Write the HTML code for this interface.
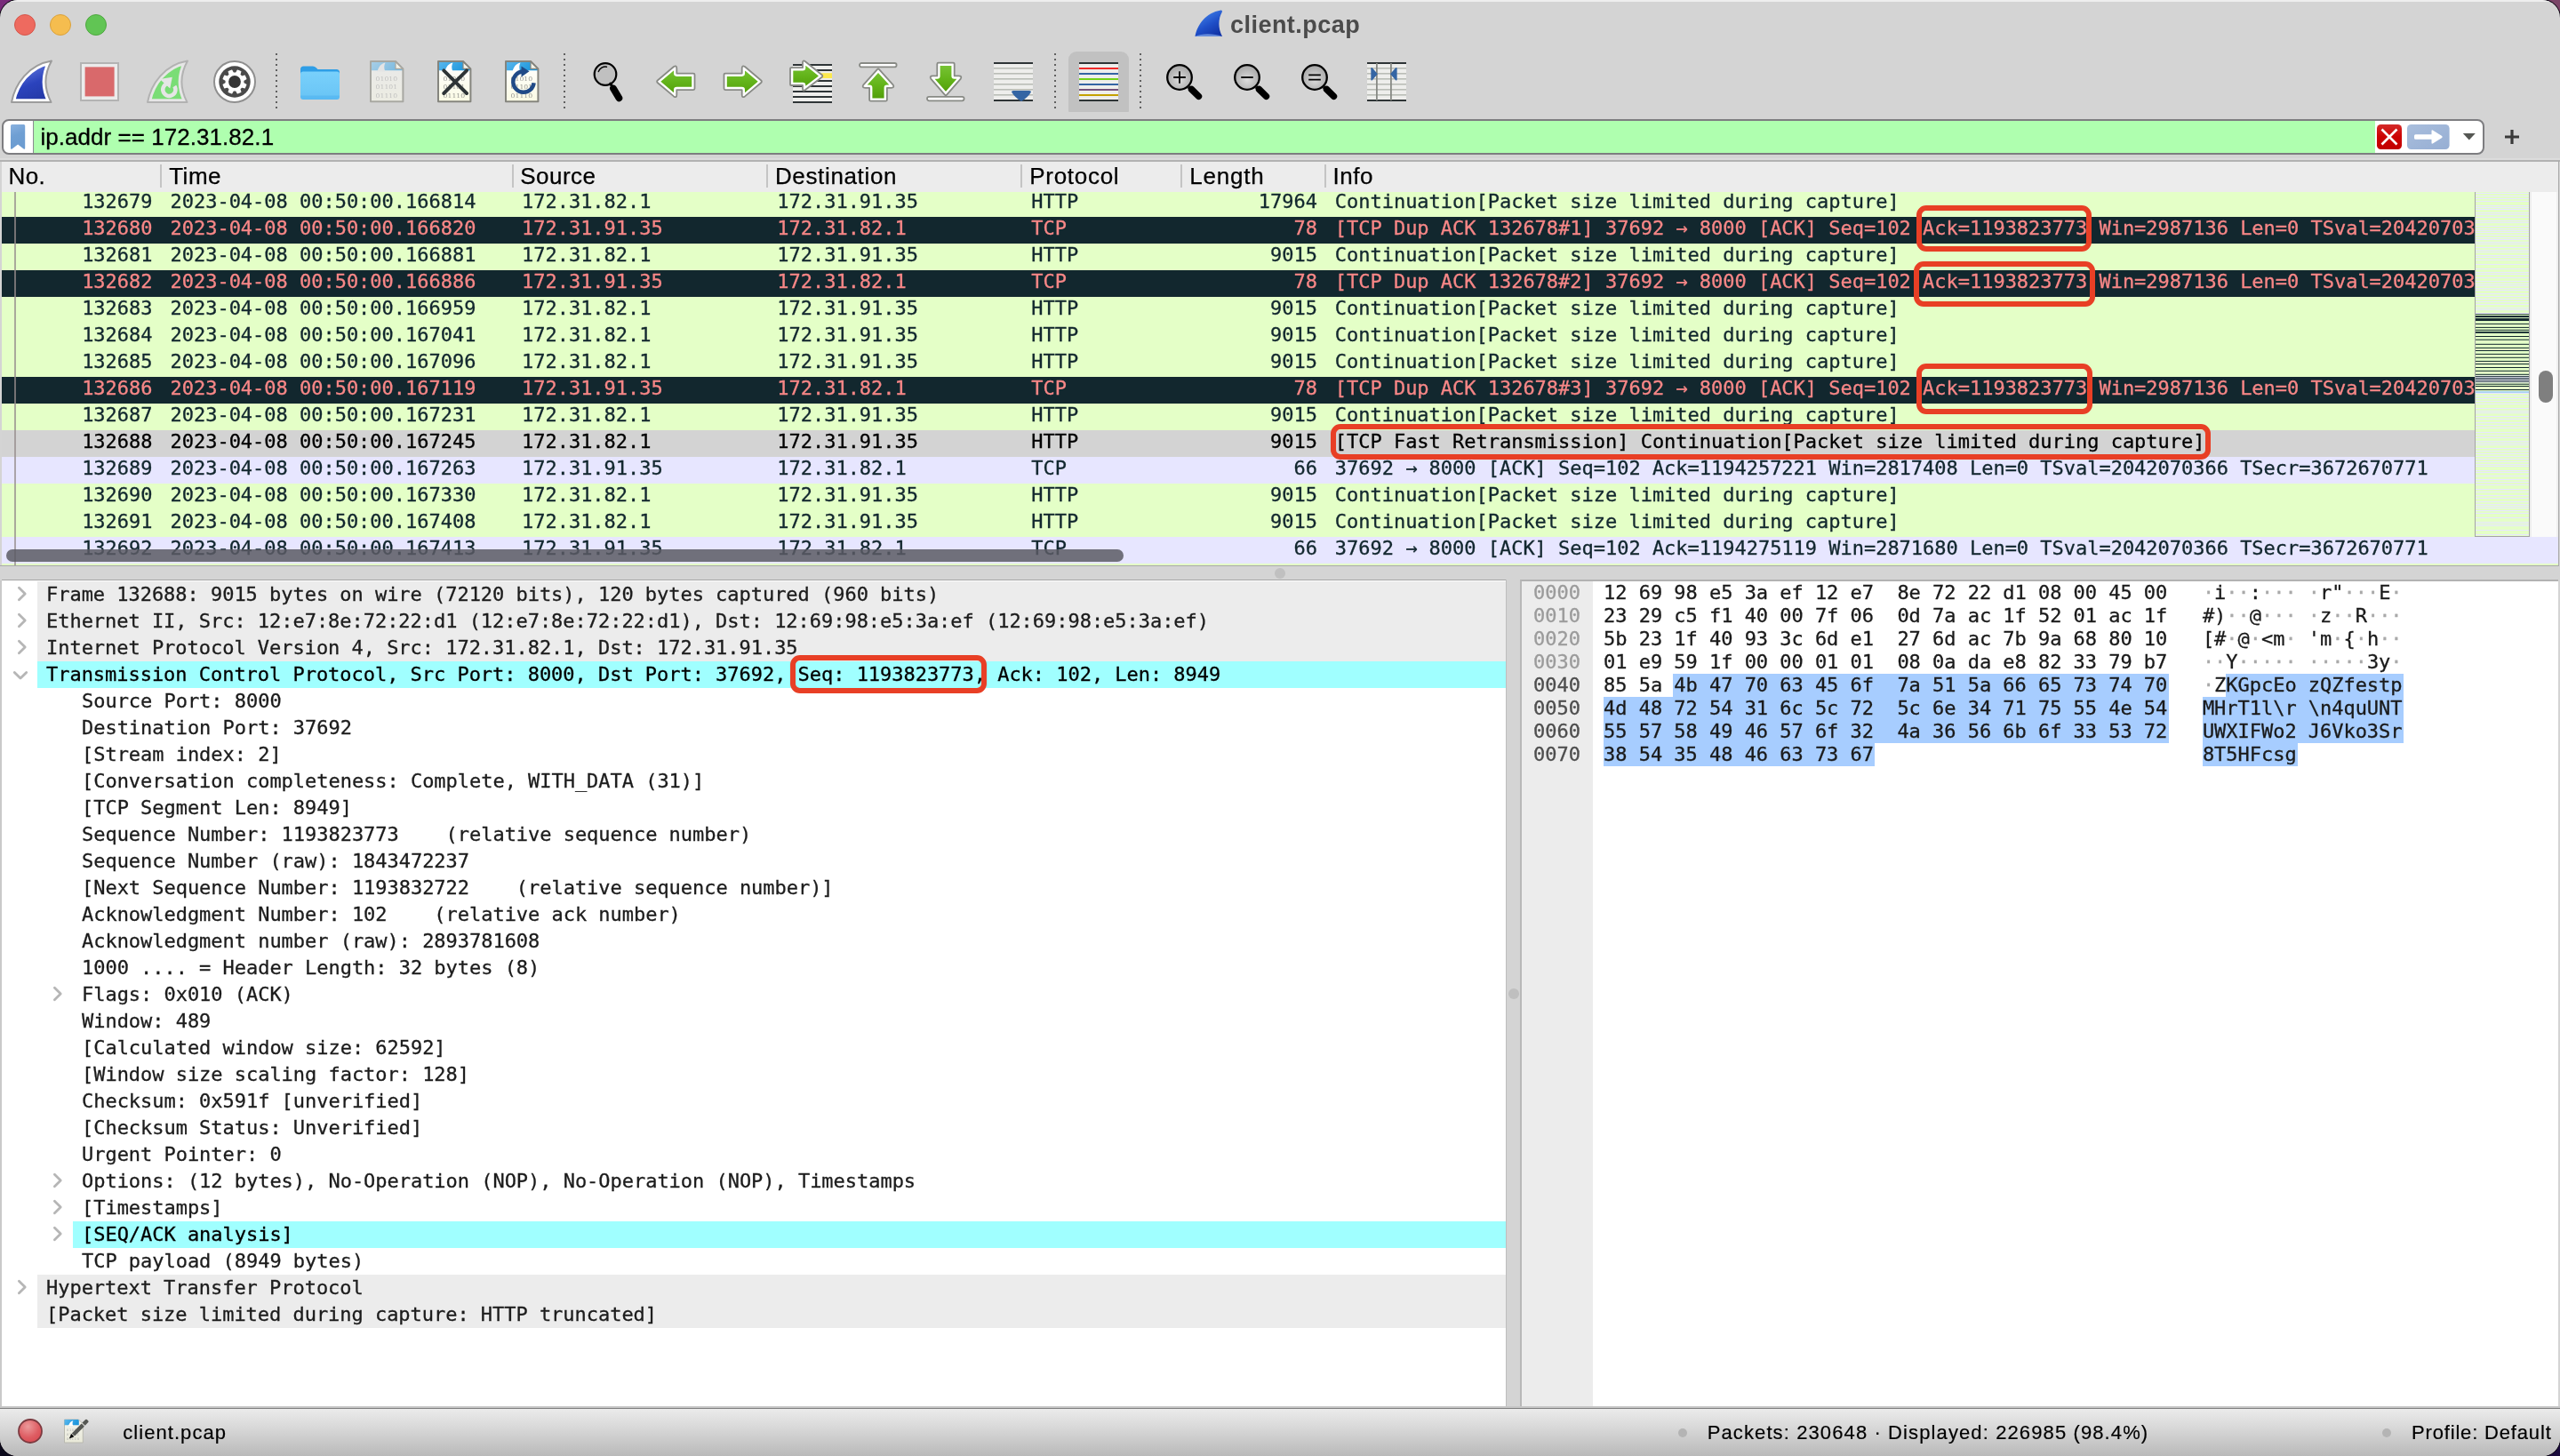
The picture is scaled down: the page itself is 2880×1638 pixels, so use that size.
<!DOCTYPE html><html><head><meta charset="utf-8"><title>client.pcap</title><style>
*{box-sizing:border-box;margin:0;padding:0}
html,body{width:2880px;height:1638px;overflow:hidden;background:#1a1030}
body{font-family:"Liberation Sans",sans-serif;position:relative}
#bg{position:absolute;left:0;top:0;width:2880px;height:1638px;background:linear-gradient(180deg,rgba(0,0,0,0) 0,rgba(0,0,0,0) 40px,#100a24 80px,#100a24 1500px,rgba(16,10,36,0) 1600px),linear-gradient(90deg,#782a7a 0,#7b4568 100%)}
#bg2{position:absolute;left:0;top:1560px;width:2880px;height:78px;background:linear-gradient(90deg,#0c0a1c 0,#1a0b3c 100%)}
#win{will-change:transform;position:absolute;left:0;top:0;width:2880px;height:1638px;border-radius:20px;background:#d4d4d4;overflow:hidden}
.abs{position:absolute}
.mono{font-family:"DejaVu Sans Mono","Liberation Mono",monospace;font-size:22px;white-space:pre;-webkit-text-stroke:0.3px}
.tl{position:absolute;top:16px;width:24px;height:24px;border-radius:50%}
#title{position:absolute;left:1384.1px;top:7.5px;font-weight:bold;font-size:27px;line-height:40px;color:#4b4b4b;letter-spacing:.45px}
.sep{position:absolute;top:59.9px;width:2.2px;height:63px;background:repeating-linear-gradient(180deg,#606060 0,#606060 2.2px,transparent 2.2px,transparent 6px)}
#filter{position:absolute;left:2px;top:134px;width:2792.5px;height:40px;border:2px solid #7d7d80;border-radius:8px;background:#fff;overflow:hidden}
#filter .green{position:absolute;left:33px;top:0;width:2635px;height:36px;background:#afffaf;border-left:1.8px solid #8b8b92}
#ftext{letter-spacing:.05px;position:absolute;left:45.4px;top:138.8px;font-size:26px;line-height:30px;color:#000;-webkit-text-stroke:.3px}
#hdr{position:absolute;left:2px;top:182px;width:2876px;height:34px;background:#ececec}
#hdrline{position:absolute;left:0;top:178px;width:2880px;height:4px;background:linear-gradient(180deg,#dcdcdc 0,#dcdcdc 2.3px,#b2b2b2 2.3px,#b2b2b2 4px)}
.hl{position:absolute;top:182.8px;font-size:26px;line-height:30px;color:#000;-webkit-text-stroke:.25px}
.hs{position:absolute;top:185px;width:2px;height:26px;background:#c4c4c4}
#list{position:absolute;left:2px;top:216px;width:2876px;height:420px;overflow:hidden;background:#e4ffc7;letter-spacing:-0.02px}
.r{position:absolute;left:0;width:2782px;height:30px;line-height:26px;color:#12272e;overflow:hidden}
.r span{position:absolute;top:0}
.g{background:#e4ffc7} .l{background:#e7e6ff} .d{background:#12272e;color:#f78787} .s{background:#d3d3d3;color:#000}
.box{position:absolute;border:6px solid #e83f25;border-radius:11px}
#tree{position:absolute;left:2px;top:652px;width:1692.4px;height:930px;background:#fff;border-top:1px solid #a4a4a4;overflow:hidden;letter-spacing:-0.033px}
.t{position:absolute;left:0;width:1693px;height:30px;line-height:29px;color:#1c1c1c}
.t i{position:absolute;top:0;height:30px;right:0;}
.t span{position:absolute;top:0}
#hex{position:absolute;left:1710px;top:652px;width:1168px;height:930px;background:#fff;border-top:2px solid #b2b2b2;border-left:2px solid #b8b8b8;overflow:hidden;letter-spacing:-0.033px}
#hexg{position:absolute;left:0;top:0;width:80px;height:930px;background:#ececec}
.h{position:absolute;left:0;height:26px;line-height:26.2px;color:#1a1a1a}
.h span{position:absolute;top:0}
.sel{position:absolute;height:26px;background:#a7cdff}
.h b{font-weight:normal;color:#a9a9a9}
#status{position:absolute;left:0;top:1585px;width:2880px;height:53px;background:linear-gradient(180deg,#ebebeb 0,#d8d8d8 40%,#b9b9b9 100%)}
#statusline{position:absolute;left:0;top:1583.6px;width:2880px;height:1.5px;background:#808080}
.st{position:absolute;top:1597px;font-size:22px;line-height:30px;color:#000;-webkit-text-stroke:.2px}
</style></head><body><div id="bg"></div><div id="bg2"></div><div class="abs" style="left:-1px;top:-1px;width:2882px;height:1640px;border-radius:21px;background:#0a0410"></div><div id="win">
<div class="abs" style="left:0;top:0;width:2880px;height:1.6px;background:#eeeeee"></div>
<div class="tl" style="left:16px;background:#ee6a5f;border:1px solid #d5554a"></div>
<div class="tl" style="left:56px;background:#f5bd4f;border:1px solid #d9a13c"></div>
<div class="tl" style="left:96px;background:#61c554;border:1px solid #4ea73f"></div>
<svg class="abs" style="left:1344px;top:11px;overflow:visible" width="32" height="31" viewBox="0 0 32 31"><defs><linearGradient id="g25" x1="0.1" y1="0" x2="0.7" y2="1"><stop offset="0" stop-color="#4a8df0"/><stop offset="0.6" stop-color="#1f4fc8"/><stop offset="1" stop-color="#1233a6"/></linearGradient></defs><path d="M0.5,30 C3,17 12,3.5 29.5,0.6 Q31.5,0.4 30.8,2.4 C26.5,10 26,20 31,30 Z" fill="url(#g25)"/><path d="M0.5,30 C8,26 22,26.5 31,30 Z" fill="#7fa6ea" opacity=".75"/></svg>
<div id="title">client.pcap</div>
<div class="sep" style="left:310px"></div>
<div class="sep" style="left:634px"></div>
<div class="sep" style="left:1186px"></div>
<div class="sep" style="left:1282px"></div>
<div class="abs" style="left:1202px;top:58px;width:68px;height:68px;background:#c1c1c1;border-radius:9px 9px 1px 1px"></div>
<svg class="abs" style="left:12px;top:68px;overflow:visible" width="48" height="48" viewBox="0 0 48 48"><defs><linearGradient id="g1" x1="0.35" y1="0.1" x2="0.7" y2="1"><stop offset="0" stop-color="#6278dc"/><stop offset="0.5" stop-color="#2b43bd"/><stop offset="1" stop-color="#2337a4"/></linearGradient><clipPath id="c2"><path d="M1,47 C5,26 20,5 46,0.6 C38.5,14 36.5,30 45.5,47 Z"/></clipPath></defs><path d="M1,47 C5,26 20,5 46,0.6 C38.5,14 36.5,30 45.5,47 Z" fill="url(#g1)" stroke="#fff" stroke-width="7.6" stroke-linejoin="miter" stroke-miterlimit="10" clip-path="url(#c2)"/><path d="M1,47 C5,26 20,5 46,0.6 C38.5,14 36.5,30 45.5,47 Z" fill="none" stroke="#9c9c9c" stroke-width="2" stroke-linejoin="round"/></svg><svg class="abs" style="left:90px;top:70px;overflow:visible" width="44" height="44" viewBox="0 0 44 44"><rect x="1" y="1" width="42" height="42" fill="#ebebeb" stroke="#b3b3b3" stroke-width="2"/><rect x="5.6" y="5.4" width="33" height="33" fill="#d9696b"/></svg><svg class="abs" style="left:164.5px;top:68px;overflow:visible" width="48" height="48" viewBox="0 0 48 48"><defs><linearGradient id="g3" x1="0.35" y1="0.1" x2="0.7" y2="1"><stop offset="0" stop-color="#7add76"/><stop offset="0.5" stop-color="#7add76"/><stop offset="1" stop-color="#7add76"/></linearGradient><clipPath id="c4"><path d="M1,47 C5,26 20,5 46,0.6 C38.5,14 36.5,30 45.5,47 Z"/></clipPath></defs><path d="M1,47 C5,26 20,5 46,0.6 C38.5,14 36.5,30 45.5,47 Z" fill="url(#g3)" stroke="#e6e6e6" stroke-width="7.6" stroke-linejoin="miter" stroke-miterlimit="10" clip-path="url(#c4)"/><path d="M1,47 C5,26 20,5 46,0.6 C38.5,14 36.5,30 45.5,47 Z" fill="none" stroke="#b2b2b2" stroke-width="2" stroke-linejoin="round"/><path d="M31.3,28.9 A7.1,7.1 0 1 1 24.7,25.7" fill="none" stroke="#e6e6e6" stroke-width="4.5"/><path d="M14.7,21 L28.8,18.7 L26.3,31.4 Z" fill="#e6e6e6"/></svg><svg class="abs" style="left:240px;top:67.85px;overflow:visible" width="48" height="48" viewBox="-24 -24 48 48"><circle cx="0" cy="0" r="23" fill="#fff" stroke="#8f8f8f" stroke-width="2"/><circle cx="0" cy="0" r="17.7" fill="#4a4a4a"/><path d="M1.57,-9.88 L3.20,-12.91 L6.87,-11.39 L5.87,-8.09 L8.09,-5.87 L11.39,-6.87 L12.91,-3.20 L9.88,-1.57 L9.88,1.57 L12.91,3.20 L11.39,6.87 L8.09,5.87 L5.87,8.09 L6.87,11.39 L3.20,12.91 L1.57,9.88 L-1.57,9.88 L-3.20,12.91 L-6.87,11.39 L-5.87,8.09 L-8.09,5.87 L-11.39,6.87 L-12.91,3.20 L-9.88,1.57 L-9.88,-1.57 L-12.91,-3.20 L-11.39,-6.87 L-8.09,-5.87 L-5.87,-8.09 L-6.87,-11.39 L-3.20,-12.91 L-1.57,-9.88Z" fill="#fff" stroke="#fff" stroke-width="1.1" stroke-linejoin="round"/><circle cx="0" cy="0" r="6.9" fill="#353535"/></svg><svg class="abs" style="left:338px;top:73.5px;overflow:visible" width="44" height="38" viewBox="0 0 44 38"><defs><linearGradient id="g5" x1="0" y1="0" x2="0" y2="1"><stop offset="0" stop-color="#79d0fb"/><stop offset="1" stop-color="#68c4f5"/></linearGradient></defs><path d="M0,4 Q0,0.5 3.5,0.5 L14,0.5 Q16,0.5 17.5,2 L19.5,4 L40.5,4 Q44,4 44,7.5 L44,12 L0,12 Z" fill="#2f9ee6"/><path d="M0,9.5 Q0,6.5 3,6.5 L41,6.5 Q44,6.5 44,9.5 L44,34.5 Q44,38 40.5,38 L3.5,38 Q0,38 0,34.5 Z" fill="url(#g5)"/><path d="M0,33.5 L44,33.5 L44,34.5 Q44,38 40.5,38 L3.5,38 Q0,38 0,34.5 Z" fill="#4db1ee" opacity=".55"/></svg><svg class="abs" style="left:416px;top:68px;overflow:visible" width="39" height="48" viewBox="0 0 39 48"><defs><linearGradient id="g6" x1="0" y1="0" x2="1" y2="0.3"><stop offset="0" stop-color="#a9cfe6"/><stop offset="1" stop-color="#7dbbe0"/></linearGradient><linearGradient id="g7" x1="0" y1="0" x2="0" y2="1"><stop offset="0" stop-color="#e9e9e9"/><stop offset="1" stop-color="#ecece2"/></linearGradient></defs><path d="M1,1 L29,1 L37.4,9.4 L37.4,46.3 L1,46.3 Z" fill="url(#g7)"/><path d="M1,1 L29,1 L37.4,9.4 L37.4,11.3 L1,11.3 Z" fill="url(#g6)"/><path d="M8.5,12.5 C10,7 12.5,3.8 17.5,2.6 C16,5.5 15.8,8.6 17.3,12.5 Z" fill="#e4e4e4"/><path d="M29,1 L29,9.4 L37.4,9.4 Z" fill="#f4f4ea" stroke="#a8a8a2" stroke-width="1.2" stroke-linejoin="round"/><path d="M1,1 L29,1 L37.4,9.4 L37.4,46.3 L1,46.3 Z" fill="none" stroke="#a8a8a2" stroke-width="2" stroke-linejoin="round"/><g font-family="'DejaVu Serif','Liberation Serif',serif" font-size="6.6" fill="#bdbdbd" opacity="0.9"><text x="6.6" y="23.3" textLength="24.5" lengthAdjust="spacingAndGlyphs">01010</text><text x="6.6" y="32.4" textLength="24.5" lengthAdjust="spacingAndGlyphs">01101</text><text x="6.6" y="41.5" textLength="24.5" lengthAdjust="spacingAndGlyphs">01110</text></g></svg><svg class="abs" style="left:492px;top:68px;overflow:visible" width="39" height="48" viewBox="0 0 39 48"><defs><linearGradient id="g8" x1="0" y1="0" x2="1" y2="0.3"><stop offset="0" stop-color="#5ab8ee"/><stop offset="1" stop-color="#1e97dc"/></linearGradient><linearGradient id="g9" x1="0" y1="0" x2="0" y2="1"><stop offset="0" stop-color="#ffffff"/><stop offset="1" stop-color="#fbfbe4"/></linearGradient></defs><path d="M1,1 L29,1 L37.4,9.4 L37.4,46.3 L1,46.3 Z" fill="url(#g9)"/><path d="M1,1 L29,1 L37.4,9.4 L37.4,11.3 L1,11.3 Z" fill="url(#g8)"/><path d="M8.5,12.5 C10,7 12.5,3.8 17.5,2.6 C16,5.5 15.8,8.6 17.3,12.5 Z" fill="#ffffff"/><path d="M29,1 L29,9.4 L37.4,9.4 Z" fill="#f4f4ea" stroke="#85857e" stroke-width="1.2" stroke-linejoin="round"/><path d="M1,1 L29,1 L37.4,9.4 L37.4,46.3 L1,46.3 Z" fill="none" stroke="#85857e" stroke-width="2" stroke-linejoin="round"/><g font-family="'DejaVu Serif','Liberation Serif',serif" font-size="6.6" fill="#9a9a94" opacity="1"><text x="6.6" y="23.3" textLength="24.5" lengthAdjust="spacingAndGlyphs">01010</text><text x="6.6" y="32.4" textLength="24.5" lengthAdjust="spacingAndGlyphs">01101</text><text x="6.6" y="41.5" textLength="24.5" lengthAdjust="spacingAndGlyphs">01110</text></g><path d="M7.3,11.3 L33,37 M33,11.3 L7.3,37" stroke="#2e3436" stroke-width="3.9" stroke-linecap="round"/></svg><svg class="abs" style="left:568px;top:68px;overflow:visible" width="39" height="48" viewBox="0 0 39 48"><defs><linearGradient id="g10" x1="0" y1="0" x2="1" y2="0.3"><stop offset="0" stop-color="#5ab8ee"/><stop offset="1" stop-color="#1e97dc"/></linearGradient><linearGradient id="g11" x1="0" y1="0" x2="0" y2="1"><stop offset="0" stop-color="#ffffff"/><stop offset="1" stop-color="#fbfbe4"/></linearGradient></defs><path d="M1,1 L29,1 L37.4,9.4 L37.4,46.3 L1,46.3 Z" fill="url(#g11)"/><path d="M1,1 L29,1 L37.4,9.4 L37.4,11.3 L1,11.3 Z" fill="url(#g10)"/><path d="M8.5,12.5 C10,7 12.5,3.8 17.5,2.6 C16,5.5 15.8,8.6 17.3,12.5 Z" fill="#ffffff"/><path d="M29,1 L29,9.4 L37.4,9.4 Z" fill="#f4f4ea" stroke="#85857e" stroke-width="1.2" stroke-linejoin="round"/><path d="M1,1 L29,1 L37.4,9.4 L37.4,46.3 L1,46.3 Z" fill="none" stroke="#85857e" stroke-width="2" stroke-linejoin="round"/><g font-family="'DejaVu Serif','Liberation Serif',serif" font-size="6.6" fill="#9a9a94" opacity="1"><text x="6.6" y="23.3" textLength="24.5" lengthAdjust="spacingAndGlyphs">01010</text><text x="6.6" y="32.4" textLength="24.5" lengthAdjust="spacingAndGlyphs">01101</text><text x="6.6" y="41.5" textLength="24.5" lengthAdjust="spacingAndGlyphs">01110</text></g><path d="M32.6,25.2 A11.7,11.7 0 1 1 19.5,12.5" fill="none" stroke="#204a87" stroke-width="4.4"/><path d="M18.5,6.5 L27.5,12.3 L18.5,18.4 Z" fill="#204a87"/></svg><svg class="abs" style="left:667px;top:69.5px;overflow:visible" width="34" height="46" viewBox="0 0 34 46"><circle cx="14" cy="13.5" r="12.3" fill="#c0c0c0" stroke="#000" stroke-width="2.2"/><path d="M6.3,10.5 A8.3,8.3 0 0 1 15.5,5.2" fill="none" stroke="#000" stroke-width="1.4" stroke-linecap="round"/><path d="M19.8,24.2 L23,29.5" stroke="#000" stroke-width="3.2" stroke-linecap="round"/><path d="M23,29.5 L29.4,40.3" stroke="#000" stroke-width="7.8" stroke-linecap="round"/></svg><svg class="abs" style="left:736px;top:68px;overflow:visible" width="48" height="48" viewBox="0 0 48 48"><defs><linearGradient id="g12" x1="0" y1="0" x2="0" y2="1"><stop offset="0" stop-color="#7cc63a"/><stop offset="0.5" stop-color="#63b41a"/><stop offset="1" stop-color="#4e9a06"/></linearGradient><clipPath id="c13"><path d="M4,25.2 Q2.2,23.7 4,22.2 L22,7 Q25.3,5 25.3,9 L25.3,14.6 L44,14.6 Q45.5,14.6 45.5,16.1 L45.5,31.6 Q45.5,33.1 44,33.1 L25.3,33.1 L25.3,38.6 Q25.3,42.6 22,40.4 Z"/></clipPath></defs><path d="M4,25.2 Q2.2,23.7 4,22.2 L22,7 Q25.3,5 25.3,9 L25.3,14.6 L44,14.6 Q45.5,14.6 45.5,16.1 L45.5,31.6 Q45.5,33.1 44,33.1 L25.3,33.1 L25.3,38.6 Q25.3,42.6 22,40.4 Z" fill="url(#g12)" stroke="#fff" stroke-width="6.6" stroke-linejoin="round" clip-path="url(#c13)"/><path d="M4,25.2 Q2.2,23.7 4,22.2 L22,7 Q25.3,5 25.3,9 L25.3,14.6 L44,14.6 Q45.5,14.6 45.5,16.1 L45.5,31.6 Q45.5,33.1 44,33.1 L25.3,33.1 L25.3,38.6 Q25.3,42.6 22,40.4 Z" fill="none" stroke="#888a85" stroke-width="1.8" stroke-linejoin="round"/></svg><svg class="abs" style="left:812px;top:68px;overflow:visible" width="48" height="48" viewBox="0 0 48 48"><defs><linearGradient id="g14" x1="0" y1="0" x2="0" y2="1"><stop offset="0" stop-color="#7cc63a"/><stop offset="0.5" stop-color="#63b41a"/><stop offset="1" stop-color="#4e9a06"/></linearGradient><clipPath id="c15"><path d="M44,25.2 Q45.8,23.7 44,22.2 L26,7 Q22.7,5 22.7,9 L22.7,14.6 L4,14.6 Q2.5,14.6 2.5,16.1 L2.5,31.6 Q2.5,33.1 4,33.1 L22.7,33.1 L22.7,38.6 Q22.7,42.6 26,40.4 Z"/></clipPath></defs><path d="M44,25.2 Q45.8,23.7 44,22.2 L26,7 Q22.7,5 22.7,9 L22.7,14.6 L4,14.6 Q2.5,14.6 2.5,16.1 L2.5,31.6 Q2.5,33.1 4,33.1 L22.7,33.1 L22.7,38.6 Q22.7,42.6 26,40.4 Z" fill="url(#g14)" stroke="#fff" stroke-width="6.6" stroke-linejoin="round" clip-path="url(#c15)"/><path d="M44,25.2 Q45.8,23.7 44,22.2 L26,7 Q22.7,5 22.7,9 L22.7,14.6 L4,14.6 Q2.5,14.6 2.5,16.1 L2.5,31.6 Q2.5,33.1 4,33.1 L22.7,33.1 L22.7,38.6 Q22.7,42.6 26,40.4 Z" fill="none" stroke="#888a85" stroke-width="1.8" stroke-linejoin="round"/></svg><svg class="abs" style="left:888px;top:68px;overflow:visible" width="48" height="48" viewBox="0 0 48 48"><g transform="translate(4,4)"><rect x="0" y="0" width="44" height="44" fill="#eeeeec"/><rect x="0" y="0" width="44" height="2" fill="#2e3436"/><rect x="0" y="6" width="44" height="2" fill="#2e3436"/><rect x="0" y="12" width="44" height="2" fill="#2e3436"/><rect x="0" y="18" width="44" height="2" fill="#2e3436"/><rect x="0" y="24" width="44" height="2" fill="#2e3436"/><rect x="0" y="30" width="44" height="2" fill="#2e3436"/><rect x="0" y="36" width="44" height="2" fill="#2e3436"/><rect x="0" y="42" width="44" height="2" fill="#2e3436"/><rect x="26" y="10.2" width="18" height="5.8" fill="#fce94f"/></g><defs><linearGradient id="g16" x1="0" y1="0" x2="0" y2="1"><stop offset="0" stop-color="#7cc63a"/><stop offset="0.5" stop-color="#63b41a"/><stop offset="1" stop-color="#4e9a06"/></linearGradient><clipPath id="c17"><path d="M1,9.2 Q1,8.2 2,8.2 L15,8.2 L15,2.5 Q15,-0.8 18,1.2 L36.6,16.2 Q38,17.5 36.6,18.8 L18,33 Q15,35 15,31.5 L15,28 L2,28 Q1,28 1,27 Z"/></clipPath></defs><path d="M1,9.2 Q1,8.2 2,8.2 L15,8.2 L15,2.5 Q15,-0.8 18,1.2 L36.6,16.2 Q38,17.5 36.6,18.8 L18,33 Q15,35 15,31.5 L15,28 L2,28 Q1,28 1,27 Z" fill="url(#g16)" stroke="#fff" stroke-width="6.6" stroke-linejoin="round" clip-path="url(#c17)"/><path d="M1,9.2 Q1,8.2 2,8.2 L15,8.2 L15,2.5 Q15,-0.8 18,1.2 L36.6,16.2 Q38,17.5 36.6,18.8 L18,33 Q15,35 15,31.5 L15,28 L2,28 Q1,28 1,27 Z" fill="none" stroke="#888a85" stroke-width="1.8" stroke-linejoin="round"/></svg><svg class="abs" style="left:966px;top:70px;overflow:visible" width="44" height="46" viewBox="0 0 44 46"><rect x="1" y="1" width="41.6" height="4.4" rx="2.2" fill="#fff" stroke="#888a85" stroke-width="1.8"/><defs><linearGradient id="g18" x1="0" y1="0" x2="0" y2="1"><stop offset="0" stop-color="#7cc63a"/><stop offset="0.5" stop-color="#63b41a"/><stop offset="1" stop-color="#4e9a06"/></linearGradient><clipPath id="c19"><path d="M20.9,8.2 Q22,6.6 23.1,8.2 L38.6,25.3 Q40.8,28.8 36.6,28.8 L31.9,28.8 L31.9,42.2 Q31.9,43.7 30.4,43.7 L13.6,43.7 Q12.1,43.7 12.1,42.2 L12.1,28.8 L7.4,28.8 Q3.2,28.8 5.4,25.3 Z"/></clipPath></defs><path d="M20.9,8.2 Q22,6.6 23.1,8.2 L38.6,25.3 Q40.8,28.8 36.6,28.8 L31.9,28.8 L31.9,42.2 Q31.9,43.7 30.4,43.7 L13.6,43.7 Q12.1,43.7 12.1,42.2 L12.1,28.8 L7.4,28.8 Q3.2,28.8 5.4,25.3 Z" fill="url(#g18)" stroke="#fff" stroke-width="6.6" stroke-linejoin="round" clip-path="url(#c19)"/><path d="M20.9,8.2 Q22,6.6 23.1,8.2 L38.6,25.3 Q40.8,28.8 36.6,28.8 L31.9,28.8 L31.9,42.2 Q31.9,43.7 30.4,43.7 L13.6,43.7 Q12.1,43.7 12.1,42.2 L12.1,28.8 L7.4,28.8 Q3.2,28.8 5.4,25.3 Z" fill="none" stroke="#888a85" stroke-width="1.8" stroke-linejoin="round"/></svg><svg class="abs" style="left:1042px;top:70px;overflow:visible" width="44" height="46" viewBox="0 0 44 46"><defs><linearGradient id="g20" x1="0" y1="0" x2="0" y2="1"><stop offset="0" stop-color="#7cc63a"/><stop offset="0.5" stop-color="#63b41a"/><stop offset="1" stop-color="#4e9a06"/></linearGradient><clipPath id="c21"><path d="M20.9,36.6 Q22,38.2 23.1,36.6 L38.6,18.9 Q40.8,15.4 36.6,15.4 L31.7,15.4 L31.7,2.1 Q31.7,0.6 30.2,0.6 L13.8,0.6 Q12.3,0.6 12.3,2.1 L12.3,15.4 L7.4,15.4 Q3.2,15.4 5.4,18.9 Z"/></clipPath></defs><path d="M20.9,36.6 Q22,38.2 23.1,36.6 L38.6,18.9 Q40.8,15.4 36.6,15.4 L31.7,15.4 L31.7,2.1 Q31.7,0.6 30.2,0.6 L13.8,0.6 Q12.3,0.6 12.3,2.1 L12.3,15.4 L7.4,15.4 Q3.2,15.4 5.4,18.9 Z" fill="url(#g20)" stroke="#fff" stroke-width="6.6" stroke-linejoin="round" clip-path="url(#c21)"/><path d="M20.9,36.6 Q22,38.2 23.1,36.6 L38.6,18.9 Q40.8,15.4 36.6,15.4 L31.7,15.4 L31.7,2.1 Q31.7,0.6 30.2,0.6 L13.8,0.6 Q12.3,0.6 12.3,2.1 L12.3,15.4 L7.4,15.4 Q3.2,15.4 5.4,18.9 Z" fill="none" stroke="#888a85" stroke-width="1.8" stroke-linejoin="round"/><rect x="1" y="38.9" width="41.6" height="4.4" rx="2.2" fill="#fff" stroke="#888a85" stroke-width="1.8"/></svg><svg class="abs" style="left:1118px;top:70px;overflow:visible" width="44" height="44" viewBox="0 0 44 44"><rect x="0" y="0" width="44" height="44" fill="#eeeeec"/><rect x="0" y="0" width="44" height="2" fill="#2e3436"/><rect x="0" y="6" width="44" height="1.6" fill="#babdb6"/><rect x="0" y="12" width="44" height="1.6" fill="#babdb6"/><rect x="0" y="18" width="44" height="1.6" fill="#babdb6"/><rect x="0" y="24" width="44" height="1.6" fill="#babdb6"/><rect x="0" y="30" width="44" height="1.6" fill="#babdb6"/><rect x="0" y="36" width="44" height="1.6" fill="#babdb6"/><rect x="0" y="42" width="44" height="2" fill="#2e3436"/><path d="M20,33.5 Q20,32 22,32 L40,32 Q42,32 42,33.5 Q38,40 31,44 Q24,40 20,33.5 Z" fill="#3465a4"/></svg><svg class="abs" style="left:1214px;top:70px;overflow:visible" width="44" height="44" viewBox="0 0 44 44"><rect x="0" y="0" width="44" height="44" fill="#eeeeec"/><rect x="0" y="0" width="44" height="2" fill="#2e3436"/><rect x="0" y="42" width="44" height="2" fill="#2e3436"/><rect x="0" y="6" width="44" height="2" fill="#ef2929"/><rect x="0" y="12" width="44" height="2" fill="#3465a4"/><rect x="0" y="18" width="44" height="2" fill="#73d216"/><rect x="0" y="24" width="44" height="2" fill="#3465a4"/><rect x="0" y="30" width="44" height="2" fill="#75507b"/><rect x="0" y="36" width="44" height="2" fill="#c4a000"/></svg><svg class="abs" style="left:1312px;top:72px;overflow:visible" width="42" height="42" viewBox="0 0 42 42"><defs><radialGradient id="g22" cx="0.5" cy="0.6" r="0.6"><stop offset="0" stop-color="#dcdcdc"/><stop offset="1" stop-color="#a4a4a4"/></radialGradient></defs><circle cx="15" cy="15" r="13.8" fill="url(#g22)" stroke="#000" stroke-width="2.3"/><path d="M25.2,25.6 L28,28.4" stroke="#000" stroke-width="4" stroke-linecap="butt"/><path d="M28.5,28.5 L36.5,36.3" stroke="#000" stroke-width="7.4" stroke-linecap="round"/><path d="M8.2,15 L21.8,15 M15,8.2 L15,21.8" stroke="#000" stroke-width="1.8"/></svg><svg class="abs" style="left:1388px;top:72px;overflow:visible" width="42" height="42" viewBox="0 0 42 42"><defs><radialGradient id="g23" cx="0.5" cy="0.6" r="0.6"><stop offset="0" stop-color="#dcdcdc"/><stop offset="1" stop-color="#a4a4a4"/></radialGradient></defs><circle cx="15" cy="15" r="13.8" fill="url(#g23)" stroke="#000" stroke-width="2.3"/><path d="M25.2,25.6 L28,28.4" stroke="#000" stroke-width="4" stroke-linecap="butt"/><path d="M28.5,28.5 L36.5,36.3" stroke="#000" stroke-width="7.4" stroke-linecap="round"/><path d="M8.2,15 L21.8,15" stroke="#000" stroke-width="1.8"/></svg><svg class="abs" style="left:1464px;top:72px;overflow:visible" width="42" height="42" viewBox="0 0 42 42"><defs><radialGradient id="g24" cx="0.5" cy="0.6" r="0.6"><stop offset="0" stop-color="#dcdcdc"/><stop offset="1" stop-color="#a4a4a4"/></radialGradient></defs><circle cx="15" cy="15" r="13.8" fill="url(#g24)" stroke="#000" stroke-width="2.3"/><path d="M25.2,25.6 L28,28.4" stroke="#000" stroke-width="4" stroke-linecap="butt"/><path d="M28.5,28.5 L36.5,36.3" stroke="#000" stroke-width="7.4" stroke-linecap="round"/><path d="M8.2,12.4 L21.8,12.4 M8.2,17.6 L21.8,17.6" stroke="#000" stroke-width="1.8"/></svg><svg class="abs" style="left:1538px;top:70px;overflow:visible" width="44" height="44" viewBox="0 0 44 44"><rect x="0" y="0" width="44" height="44" fill="#eeeeec"/><rect x="0" y="0" width="44" height="2" fill="#2e3436"/><rect x="0" y="6" width="44" height="1.6" fill="#babdb6"/><rect x="0" y="12" width="44" height="1.6" fill="#babdb6"/><rect x="0" y="18" width="44" height="1.6" fill="#babdb6"/><rect x="0" y="24" width="44" height="1.6" fill="#babdb6"/><rect x="0" y="30" width="44" height="1.6" fill="#babdb6"/><rect x="0" y="36" width="44" height="1.6" fill="#babdb6"/><rect x="0" y="42" width="44" height="2" fill="#2e3436"/><rect x="10" y="1" width="1.8" height="42" fill="#888a85"/><rect x="26" y="1" width="1.8" height="42" fill="#888a85"/><path d="M4.3,7.3 Q4.3,5.6 5.8,6.3 L11.8,13.2 L5.8,20.3 Q4.3,21 4.3,19.4 Z" fill="#3465a4"/><path d="M33.6,7.3 Q33.6,5.6 32.1,6.3 L26.1,13.2 L32.1,20.3 Q33.6,21 33.6,19.4 Z" fill="#3465a4"/></svg>
<div id="filter"><div class="green"></div></div><div id="ftext">ip.addr == 172.31.82.1</div>
<svg class="abs" style="left:11.8px;top:139.8px;overflow:visible" width="17" height="28" viewBox="0 0 17 28"><defs><linearGradient id="g26" x1="0" y1="0" x2="0.25" y2="1"><stop offset="0" stop-color="#8ab2e0"/><stop offset="0.5" stop-color="#6f9fd3"/><stop offset="1" stop-color="#6c9cd1"/></linearGradient></defs><path d="M0,1.5 Q0,0 1.5,0 L14.7,0 Q16.2,0 16.2,1.5 L16.2,26.6 Q16.2,28.6 14.6,27.4 L8.1,22.4 L1.6,27.4 Q0,28.6 0,26.6 Z" fill="url(#g26)"/></svg><svg class="abs" style="left:2674px;top:140px;overflow:visible" width="112" height="28" viewBox="0 0 112 28"><defs><linearGradient id="g27" x1="0" y1="0" x2="0" y2="1"><stop offset="0" stop-color="#d42a2a"/><stop offset="0.5" stop-color="#cc0000"/><stop offset="1" stop-color="#c20000"/></linearGradient><linearGradient id="g28" x1="0" y1="0" x2="1" y2="1"><stop offset="0" stop-color="#a9bedd"/><stop offset="1" stop-color="#96aed3"/></linearGradient></defs><rect x="0" y="0" width="28" height="28" rx="4.5" fill="url(#g27)"/><path d="M5.5,5.5 L22.5,22.5 M22.5,5.5 L5.5,22.5" stroke="#fff" stroke-width="2.6" stroke-linecap="butt"/><rect x="34" y="0" width="47.6" height="28" rx="4.5" fill="url(#g28)"/><path d="M43.5,11.2 Q42,11.2 42,12.7 L42,15.3 Q42,16.8 43.5,16.8 L61.5,16.8 L61.5,20.5 Q61.5,22.5 63.2,21.3 L73.2,14.9 Q74.2,14 73.2,13.1 L63.2,6.7 Q61.5,5.5 61.5,7.5 L61.5,11.2 Z" fill="#fff"/><path d="M96.8,10 L110.8,10 L103.8,17.4 Z" fill="#555753"/></svg><svg class="abs" style="left:2818px;top:146px;overflow:visible" width="16" height="16" viewBox="0 0 16 16"><path d="M0,8 L16,8 M8,0 L8,16" stroke="#3a3a3a" stroke-width="3.2"/></svg>
<div id="hdrline"></div><div id="hdr"></div>
<div class="hl" style="left:9.6px;letter-spacing:0.3px">No.</div>
<div class="hl" style="left:190.2px;letter-spacing:0.5px">Time</div>
<div class="hl" style="left:585.2px;letter-spacing:0.5px">Source</div>
<div class="hl" style="left:871.9px;letter-spacing:0.65px">Destination</div>
<div class="hl" style="left:1158.3px;letter-spacing:0.7px">Protocol</div>
<div class="hl" style="left:1338.3px;letter-spacing:0.8px">Length</div>
<div class="hl" style="left:1499.6px;letter-spacing:0.5px">Info</div>
<div class="hs" style="left:180px"></div>
<div class="hs" style="left:576px"></div>
<div class="hs" style="left:862px"></div>
<div class="hs" style="left:1148px"></div>
<div class="hs" style="left:1328px"></div>
<div class="hs" style="left:1490px"></div>
<div id="list" class="mono">
<div class="r g" style="top:-2px;width:2782px"><span style="right:2612.5px">132679</span><span style="left:189.5px">2023-04-08 00:50:00.166814</span><span style="left:585px">172.31.82.1</span><span style="left:872.3px">172.31.91.35</span><span style="left:1158.3px">HTTP</span><span style="right:1302.0px">17964</span><span style="left:1499.8px">Continuation[Packet size limited during capture]</span></div>
<div class="r d" style="top:28px;width:2782px"><span style="right:2612.5px">132680</span><span style="left:189.5px">2023-04-08 00:50:00.166820</span><span style="left:585px">172.31.91.35</span><span style="left:872.3px">172.31.82.1</span><span style="left:1158.3px">TCP</span><span style="right:1302.0px">78</span><span style="left:1499.8px">[TCP Dup ACK 132678#1] 37692 → 8000 [ACK] Seq=102 Ack=1193823773 Win=2987136 Len=0 TSval=2042070366 TSecr=3672670771</span></div>
<div class="r g" style="top:58px;width:2782px"><span style="right:2612.5px">132681</span><span style="left:189.5px">2023-04-08 00:50:00.166881</span><span style="left:585px">172.31.82.1</span><span style="left:872.3px">172.31.91.35</span><span style="left:1158.3px">HTTP</span><span style="right:1302.0px">9015</span><span style="left:1499.8px">Continuation[Packet size limited during capture]</span></div>
<div class="r d" style="top:88px;width:2782px"><span style="right:2612.5px">132682</span><span style="left:189.5px">2023-04-08 00:50:00.166886</span><span style="left:585px">172.31.91.35</span><span style="left:872.3px">172.31.82.1</span><span style="left:1158.3px">TCP</span><span style="right:1302.0px">78</span><span style="left:1499.8px">[TCP Dup ACK 132678#2] 37692 → 8000 [ACK] Seq=102 Ack=1193823773 Win=2987136 Len=0 TSval=2042070366 TSecr=3672670771</span></div>
<div class="r g" style="top:118px;width:2782px"><span style="right:2612.5px">132683</span><span style="left:189.5px">2023-04-08 00:50:00.166959</span><span style="left:585px">172.31.82.1</span><span style="left:872.3px">172.31.91.35</span><span style="left:1158.3px">HTTP</span><span style="right:1302.0px">9015</span><span style="left:1499.8px">Continuation[Packet size limited during capture]</span></div>
<div class="r g" style="top:148px;width:2782px"><span style="right:2612.5px">132684</span><span style="left:189.5px">2023-04-08 00:50:00.167041</span><span style="left:585px">172.31.82.1</span><span style="left:872.3px">172.31.91.35</span><span style="left:1158.3px">HTTP</span><span style="right:1302.0px">9015</span><span style="left:1499.8px">Continuation[Packet size limited during capture]</span></div>
<div class="r g" style="top:178px;width:2782px"><span style="right:2612.5px">132685</span><span style="left:189.5px">2023-04-08 00:50:00.167096</span><span style="left:585px">172.31.82.1</span><span style="left:872.3px">172.31.91.35</span><span style="left:1158.3px">HTTP</span><span style="right:1302.0px">9015</span><span style="left:1499.8px">Continuation[Packet size limited during capture]</span></div>
<div class="r d" style="top:208px;width:2782px"><span style="right:2612.5px">132686</span><span style="left:189.5px">2023-04-08 00:50:00.167119</span><span style="left:585px">172.31.91.35</span><span style="left:872.3px">172.31.82.1</span><span style="left:1158.3px">TCP</span><span style="right:1302.0px">78</span><span style="left:1499.8px">[TCP Dup ACK 132678#3] 37692 → 8000 [ACK] Seq=102 Ack=1193823773 Win=2987136 Len=0 TSval=2042070366 TSecr=3672670771</span></div>
<div class="r g" style="top:238px;width:2782px"><span style="right:2612.5px">132687</span><span style="left:189.5px">2023-04-08 00:50:00.167231</span><span style="left:585px">172.31.82.1</span><span style="left:872.3px">172.31.91.35</span><span style="left:1158.3px">HTTP</span><span style="right:1302.0px">9015</span><span style="left:1499.8px">Continuation[Packet size limited during capture]</span></div>
<div class="r s" style="top:268px;width:2782px"><span style="right:2612.5px">132688</span><span style="left:189.5px">2023-04-08 00:50:00.167245</span><span style="left:585px">172.31.82.1</span><span style="left:872.3px">172.31.91.35</span><span style="left:1158.3px">HTTP</span><span style="right:1302.0px">9015</span><span style="left:1499.8px">[TCP Fast Retransmission] Continuation[Packet size limited during capture]</span></div>
<div class="r l" style="top:298px;width:2782px"><span style="right:2612.5px">132689</span><span style="left:189.5px">2023-04-08 00:50:00.167263</span><span style="left:585px">172.31.91.35</span><span style="left:872.3px">172.31.82.1</span><span style="left:1158.3px">TCP</span><span style="right:1302.0px">66</span><span style="left:1499.8px">37692 → 8000 [ACK] Seq=102 Ack=1194257221 Win=2817408 Len=0 TSval=2042070366 TSecr=3672670771</span></div>
<div class="r g" style="top:328px;width:2782px"><span style="right:2612.5px">132690</span><span style="left:189.5px">2023-04-08 00:50:00.167330</span><span style="left:585px">172.31.82.1</span><span style="left:872.3px">172.31.91.35</span><span style="left:1158.3px">HTTP</span><span style="right:1302.0px">9015</span><span style="left:1499.8px">Continuation[Packet size limited during capture]</span></div>
<div class="r g" style="top:358px;width:2782px"><span style="right:2612.5px">132691</span><span style="left:189.5px">2023-04-08 00:50:00.167408</span><span style="left:585px">172.31.82.1</span><span style="left:872.3px">172.31.91.35</span><span style="left:1158.3px">HTTP</span><span style="right:1302.0px">9015</span><span style="left:1499.8px">Continuation[Packet size limited during capture]</span></div>
<div class="r l" style="top:388px;width:2876px"><span style="right:2706.5px">132692</span><span style="left:189.5px">2023-04-08 00:50:00.167413</span><span style="left:585px">172.31.91.35</span><span style="left:872.3px">172.31.82.1</span><span style="left:1158.3px">TCP</span><span style="right:1396.0px">66</span><span style="left:1499.8px">37692 → 8000 [ACK] Seq=102 Ack=1194275119 Win=2871680 Len=0 TSval=2042070366 TSecr=3672670771</span></div>
<div class="abs" style="left:14px;top:0;width:2px;height:420px;background:rgba(150,140,140,.75)"></div>
<div class="abs" style="left:2782px;top:0;width:62px;height:388px;background:#e4ffc7;border:1px solid #a3a3a3;border-top:0"></div><svg class="abs" style="left:2783px;top:0" width="60" height="387" viewBox="0 0 60 387"><rect x="0" y="1.0" width="60" height="1" fill="#e7e6ff"/><rect x="0" y="4.0" width="60" height="1" fill="#e7e6ff"/><rect x="0" y="7.0" width="60" height="1" fill="#e7e6ff"/><rect x="0" y="10.0" width="60" height="1" fill="#e7e6ff"/><rect x="0" y="15.0" width="60" height="1" fill="#e7e6ff"/><rect x="0" y="17.0" width="60" height="1" fill="#e7e6ff"/><rect x="0" y="19.0" width="60" height="1" fill="#e7e6ff"/><rect x="0" y="23.0" width="60" height="1" fill="#e7e6ff"/><rect x="0" y="25.0" width="60" height="1" fill="#e7e6ff"/><rect x="0" y="28.0" width="60" height="1" fill="#e7e6ff"/><rect x="0" y="32.0" width="60" height="1" fill="#e7e6ff"/><rect x="0" y="34.0" width="60" height="1" fill="#e7e6ff"/><rect x="0" y="38.0" width="60" height="1" fill="#e7e6ff"/><rect x="0" y="41.0" width="60" height="1" fill="#e7e6ff"/><rect x="0" y="43.0" width="60" height="1" fill="#e7e6ff"/><rect x="0" y="45.0" width="60" height="1" fill="#e7e6ff"/><rect x="0" y="48.0" width="60" height="1" fill="#e7e6ff"/><rect x="0" y="51.0" width="60" height="1" fill="#e7e6ff"/><rect x="0" y="53.0" width="60" height="1" fill="#e7e6ff"/><rect x="0" y="56.0" width="60" height="1" fill="#e7e6ff"/><rect x="0" y="58.0" width="60" height="1" fill="#e7e6ff"/><rect x="0" y="62.0" width="60" height="1" fill="#e7e6ff"/><rect x="0" y="65.0" width="60" height="1" fill="#e7e6ff"/><rect x="0" y="67.0" width="60" height="1" fill="#e7e6ff"/><rect x="0" y="71.0" width="60" height="1" fill="#e7e6ff"/><rect x="0" y="73.0" width="60" height="1" fill="#e7e6ff"/><rect x="0" y="76.0" width="60" height="1" fill="#e7e6ff"/><rect x="0" y="81.0" width="60" height="1" fill="#e7e6ff"/><rect x="0" y="86.0" width="60" height="1" fill="#e7e6ff"/><rect x="0" y="90.0" width="60" height="1" fill="#e7e6ff"/><rect x="0" y="92.0" width="60" height="1" fill="#e7e6ff"/><rect x="0" y="96.0" width="60" height="1" fill="#e7e6ff"/><rect x="0" y="100.0" width="60" height="1" fill="#e7e6ff"/><rect x="0" y="103.0" width="60" height="1" fill="#e7e6ff"/><rect x="0" y="105.0" width="60" height="1" fill="#e7e6ff"/><rect x="0" y="108.0" width="60" height="1" fill="#e7e6ff"/><rect x="0" y="110.0" width="60" height="1" fill="#e7e6ff"/><rect x="0" y="114.0" width="60" height="1" fill="#e7e6ff"/><rect x="0" y="117.0" width="60" height="1" fill="#e7e6ff"/><rect x="0" y="120.0" width="60" height="1" fill="#e7e6ff"/><rect x="0" y="123.0" width="60" height="1" fill="#e7e6ff"/><rect x="0" y="126.0" width="60" height="1" fill="#e7e6ff"/><rect x="0" y="130.0" width="60" height="1" fill="#e7e6ff"/><rect x="0" y="132.0" width="60" height="1" fill="#e7e6ff"/><rect x="0" y="136.0" width="60" height="1" fill="#e7e6ff"/><rect x="0" y="226.0" width="60" height="1" fill="#e7e6ff"/><rect x="0" y="229.0" width="60" height="1" fill="#e7e6ff"/><rect x="0" y="232.0" width="60" height="1" fill="#e7e6ff"/><rect x="0" y="235.0" width="60" height="1" fill="#e7e6ff"/><rect x="0" y="238.0" width="60" height="1" fill="#e7e6ff"/><rect x="0" y="243.0" width="60" height="1" fill="#e7e6ff"/><rect x="0" y="246.0" width="60" height="1" fill="#e7e6ff"/><rect x="0" y="248.0" width="60" height="1" fill="#e7e6ff"/><rect x="0" y="252.0" width="60" height="1" fill="#e7e6ff"/><rect x="0" y="255.0" width="60" height="1" fill="#e7e6ff"/><rect x="0" y="259.0" width="60" height="1" fill="#e7e6ff"/><rect x="0" y="262.0" width="60" height="1" fill="#e7e6ff"/><rect x="0" y="265.0" width="60" height="1" fill="#e7e6ff"/><rect x="0" y="270.0" width="60" height="1" fill="#e7e6ff"/><rect x="0" y="273.0" width="60" height="1" fill="#e7e6ff"/><rect x="0" y="276.0" width="60" height="1" fill="#e7e6ff"/><rect x="0" y="280.0" width="60" height="1" fill="#e7e6ff"/><rect x="0" y="282.0" width="60" height="1" fill="#e7e6ff"/><rect x="0" y="284.0" width="60" height="1" fill="#e7e6ff"/><rect x="0" y="288.0" width="60" height="1" fill="#e7e6ff"/><rect x="0" y="291.0" width="60" height="1" fill="#e7e6ff"/><rect x="0" y="294.0" width="60" height="1" fill="#e7e6ff"/><rect x="0" y="297.0" width="60" height="1" fill="#e7e6ff"/><rect x="0" y="300.0" width="60" height="1" fill="#e7e6ff"/><rect x="0" y="303.0" width="60" height="1" fill="#e7e6ff"/><rect x="0" y="306.0" width="60" height="1" fill="#e7e6ff"/><rect x="0" y="308.0" width="60" height="1" fill="#e7e6ff"/><rect x="0" y="313.0" width="60" height="1" fill="#e7e6ff"/><rect x="0" y="315.0" width="60" height="1" fill="#e7e6ff"/><rect x="0" y="319.0" width="60" height="1" fill="#e7e6ff"/><rect x="0" y="323.0" width="60" height="1" fill="#e7e6ff"/><rect x="0" y="326.0" width="60" height="1" fill="#e7e6ff"/><rect x="0" y="329.0" width="60" height="1" fill="#e7e6ff"/><rect x="0" y="334.0" width="60" height="1" fill="#e7e6ff"/><rect x="0" y="337.0" width="60" height="1" fill="#e7e6ff"/><rect x="0" y="341.0" width="60" height="1" fill="#e7e6ff"/><rect x="0" y="344.0" width="60" height="1" fill="#e7e6ff"/><rect x="0" y="348.0" width="60" height="1" fill="#e7e6ff"/><rect x="0" y="351.0" width="60" height="1" fill="#e7e6ff"/><rect x="0" y="353.0" width="60" height="1" fill="#e7e6ff"/><rect x="0" y="355.0" width="60" height="1" fill="#e7e6ff"/><rect x="0" y="358.0" width="60" height="1" fill="#e7e6ff"/><rect x="0" y="361.0" width="60" height="1" fill="#e7e6ff"/><rect x="0" y="366.0" width="60" height="1" fill="#e7e6ff"/><rect x="0" y="371.0" width="60" height="1" fill="#e7e6ff"/><rect x="0" y="373.0" width="60" height="1" fill="#e7e6ff"/><rect x="0" y="375.0" width="60" height="1" fill="#e7e6ff"/><rect x="0" y="380.0" width="60" height="1" fill="#e7e6ff"/><rect x="0" y="385.0" width="60" height="1" fill="#e7e6ff"/><rect x="0" y="206.5" width="60" height="8" fill="#eeeefc"/><rect x="0" y="137.00" width="60" height="0.8" fill="#12272e"/><rect x="0" y="139.05" width="60" height="2.1" fill="#12272e"/><rect x="0" y="142.15" width="60" height="2.9" fill="#12272e"/><rect x="0" y="147.90" width="60" height="1" fill="#12272e"/><rect x="0" y="151.90" width="60" height="1" fill="#12272e"/><rect x="0" y="154.80" width="60" height="1" fill="#12272e"/><rect x="0" y="156.95" width="60" height="1.9" fill="#12272e"/><rect x="0" y="162.00" width="60" height="1" fill="#12272e"/><rect x="0" y="165.70" width="60" height="1" fill="#12272e"/><rect x="0" y="170.80" width="60" height="1" fill="#12272e"/><rect x="0" y="174.90" width="60" height="1" fill="#12272e"/><rect x="0" y="178.00" width="60" height="1" fill="#12272e"/><rect x="0" y="181.90" width="60" height="1" fill="#12272e"/><rect x="0" y="185.80" width="60" height="1" fill="#12272e"/><rect x="0" y="189.90" width="60" height="1" fill="#12272e"/><rect x="0" y="193.00" width="60" height="1" fill="#12272e"/><rect x="0" y="197.00" width="60" height="1" fill="#12272e"/><rect x="0" y="200.80" width="60" height="1" fill="#12272e"/><rect x="0" y="204.80" width="60" height="1" fill="#12272e"/><rect x="0" y="207.15" width="60" height="0.9" fill="#12272e"/><rect x="0" y="208.95" width="60" height="0.9" fill="#12272e"/><rect x="0" y="210.85" width="60" height="0.9" fill="#12272e"/><rect x="0" y="212.85" width="60" height="0.9" fill="#12272e"/><rect x="0" y="215.70" width="60" height="1" fill="#12272e"/><rect x="0" y="218.00" width="60" height="1" fill="#12272e"/><rect x="0" y="222.00" width="60" height="1" fill="#12272e"/><rect x="0" y="224.2" width="60" height="1.7" fill="#a4cdf9"/></svg><div class="abs" style="left:2844px;top:0;width:32px;height:388px;background:#fafafa;border-left:2px solid #ededed;border-right:2px solid #f0f0f0"></div><div class="abs" style="left:2854px;top:201px;width:16px;height:36px;border-radius:8px;background:#7f7f7f"></div>
</div>
<div class="box" style="left:2156px;top:231px;width:197px;height:52px"></div>
<div class="box" style="left:2153px;top:294px;width:203.5px;height:50.5px"></div>
<div class="box" style="left:2156px;top:408.5px;width:198px;height:57.0px"></div>
<div class="box" style="left:1497px;top:477px;width:990px;height:40px"></div>
<div class="abs" style="left:2878px;top:181px;width:1px;height:456px;background:#a9a9a9"></div>
<div class="abs" style="left:7px;top:617.6px;width:1257px;height:14px;border-radius:7px;background:rgba(90,90,100,.85)"></div>
<div class="abs" style="left:0;top:636px;width:2878px;height:1px;background:#a9a9a9"></div>
<div class="abs" style="left:1434px;top:639px;width:12px;height:12px;border-radius:50%;background:#c0c0c0"></div>
<div class="abs" style="left:1697px;top:1112px;width:12px;height:12px;border-radius:50%;background:#bfbfbf"></div>
<div id="tree" class="mono">
<div class="t" style="top:1px"><i style="left:40px;background:#ececec"></i><svg class="abs" style="left:14.3px;top:5.4px" width="18" height="18" viewBox="0 0 18 18"><path d="M5.4 2.3 L12.2 9 L5.4 15.7" fill="none" stroke="#b6b6b6" stroke-width="2.8" stroke-linecap="round" stroke-linejoin="round"/></svg><span style="left:50px">Frame 132688: 9015 bytes on wire (72120 bits), 120 bytes captured (960 bits)</span></div>
<div class="t" style="top:31px"><i style="left:40px;background:#ececec"></i><svg class="abs" style="left:14.3px;top:5.4px" width="18" height="18" viewBox="0 0 18 18"><path d="M5.4 2.3 L12.2 9 L5.4 15.7" fill="none" stroke="#b6b6b6" stroke-width="2.8" stroke-linecap="round" stroke-linejoin="round"/></svg><span style="left:50px">Ethernet II, Src: 12:e7:8e:72:22:d1 (12:e7:8e:72:22:d1), Dst: 12:69:98:e5:3a:ef (12:69:98:e5:3a:ef)</span></div>
<div class="t" style="top:61px"><i style="left:40px;background:#ececec"></i><svg class="abs" style="left:14.3px;top:5.4px" width="18" height="18" viewBox="0 0 18 18"><path d="M5.4 2.3 L12.2 9 L5.4 15.7" fill="none" stroke="#b6b6b6" stroke-width="2.8" stroke-linecap="round" stroke-linejoin="round"/></svg><span style="left:50px">Internet Protocol Version 4, Src: 172.31.82.1, Dst: 172.31.91.35</span></div>
<div class="t" style="top:91px"><i style="left:40px;background:#a0ffff"></i><svg class="abs" style="left:12.2px;top:7.3px" width="18" height="18" viewBox="0 0 18 18"><path d="M2.3 5.4 L9 12.1 L15.7 5.4" fill="none" stroke="#b6b6b6" stroke-width="2.8" stroke-linecap="round" stroke-linejoin="round"/></svg><span style="left:50px;color:#000">Transmission Control Protocol, Src Port: 8000, Dst Port: 37692, Seq: 1193823773, Ack: 102, Len: 8949</span></div>
<div class="t" style="top:121px"><span style="left:90px">Source Port: 8000</span></div>
<div class="t" style="top:151px"><span style="left:90px">Destination Port: 37692</span></div>
<div class="t" style="top:181px"><span style="left:90px">[Stream index: 2]</span></div>
<div class="t" style="top:211px"><span style="left:90px">[Conversation completeness: Complete, WITH_DATA (31)]</span></div>
<div class="t" style="top:241px"><span style="left:90px">[TCP Segment Len: 8949]</span></div>
<div class="t" style="top:271px"><span style="left:90px">Sequence Number: 1193823773    (relative sequence number)</span></div>
<div class="t" style="top:301px"><span style="left:90px">Sequence Number (raw): 1843472237</span></div>
<div class="t" style="top:331px"><span style="left:90px">[Next Sequence Number: 1193832722    (relative sequence number)]</span></div>
<div class="t" style="top:361px"><span style="left:90px">Acknowledgment Number: 102    (relative ack number)</span></div>
<div class="t" style="top:391px"><span style="left:90px">Acknowledgment number (raw): 2893781608</span></div>
<div class="t" style="top:421px"><span style="left:90px">1000 .... = Header Length: 32 bytes (8)</span></div>
<div class="t" style="top:451px"><svg class="abs" style="left:54.3px;top:5.4px" width="18" height="18" viewBox="0 0 18 18"><path d="M5.4 2.3 L12.2 9 L5.4 15.7" fill="none" stroke="#b6b6b6" stroke-width="2.8" stroke-linecap="round" stroke-linejoin="round"/></svg><span style="left:90px">Flags: 0x010 (ACK)</span></div>
<div class="t" style="top:481px"><span style="left:90px">Window: 489</span></div>
<div class="t" style="top:511px"><span style="left:90px">[Calculated window size: 62592]</span></div>
<div class="t" style="top:541px"><span style="left:90px">[Window size scaling factor: 128]</span></div>
<div class="t" style="top:571px"><span style="left:90px">Checksum: 0x591f [unverified]</span></div>
<div class="t" style="top:601px"><span style="left:90px">[Checksum Status: Unverified]</span></div>
<div class="t" style="top:631px"><span style="left:90px">Urgent Pointer: 0</span></div>
<div class="t" style="top:661px"><svg class="abs" style="left:54.3px;top:5.4px" width="18" height="18" viewBox="0 0 18 18"><path d="M5.4 2.3 L12.2 9 L5.4 15.7" fill="none" stroke="#b6b6b6" stroke-width="2.8" stroke-linecap="round" stroke-linejoin="round"/></svg><span style="left:90px">Options: (12 bytes), No-Operation (NOP), No-Operation (NOP), Timestamps</span></div>
<div class="t" style="top:691px"><svg class="abs" style="left:54.3px;top:5.4px" width="18" height="18" viewBox="0 0 18 18"><path d="M5.4 2.3 L12.2 9 L5.4 15.7" fill="none" stroke="#b6b6b6" stroke-width="2.8" stroke-linecap="round" stroke-linejoin="round"/></svg><span style="left:90px">[Timestamps]</span></div>
<div class="t" style="top:721px"><i style="left:80px;background:#a0ffff"></i><svg class="abs" style="left:54.3px;top:5.4px" width="18" height="18" viewBox="0 0 18 18"><path d="M5.4 2.3 L12.2 9 L5.4 15.7" fill="none" stroke="#b6b6b6" stroke-width="2.8" stroke-linecap="round" stroke-linejoin="round"/></svg><span style="left:90px;color:#000">[SEQ/ACK analysis]</span></div>
<div class="t" style="top:751px"><span style="left:90px">TCP payload (8949 bytes)</span></div>
<div class="t" style="top:781px"><i style="left:40px;background:#ececec"></i><svg class="abs" style="left:14.3px;top:5.4px" width="18" height="18" viewBox="0 0 18 18"><path d="M5.4 2.3 L12.2 9 L5.4 15.7" fill="none" stroke="#b6b6b6" stroke-width="2.8" stroke-linecap="round" stroke-linejoin="round"/></svg><span style="left:50px">Hypertext Transfer Protocol</span></div>
<div class="t" style="top:811px"><i style="left:40px;background:#ececec"></i><span style="left:50px">[Packet size limited during capture: HTTP truncated]</span></div>
</div>
<div class="box" style="left:889.3px;top:737.4px;width:220.3px;height:42.2px"></div>
<div id="hex" class="mono"><div id="hexg"></div>
<div class="sel" style="top:104px;left:170.0px;width:557.6px"></div>
<div class="sel" style="top:104px;left:792.3px;width:199.7px"></div>
<div class="sel" style="top:130px;left:92.1px;width:635.5px"></div>
<div class="sel" style="top:130px;left:765.9px;width:226.1px"></div>
<div class="sel" style="top:156px;left:92.1px;width:635.5px"></div>
<div class="sel" style="top:156px;left:765.9px;width:226.1px"></div>
<div class="sel" style="top:182px;left:92.1px;width:305.2px"></div>
<div class="sel" style="top:182px;left:765.9px;width:107.2px"></div>
<div class="h" style="top:0px"><span style="left:13px;color:#9b9b9b">0000</span><span style="left:92.1px">12 69 98 e5 3a ef 12 e7  8e 72 22 d1 08 00 45 00</span><span style="left:765.9px"><b>·</b>i<b>··</b>:<b>···</b> <b>·</b>r"<b>···</b>E<b>·</b></span></div>
<div class="h" style="top:26px"><span style="left:13px;color:#9b9b9b">0010</span><span style="left:92.1px">23 29 c5 f1 40 00 7f 06  0d 7a ac 1f 52 01 ac 1f</span><span style="left:765.9px">#)<b>··</b>@<b>···</b> <b>·</b>z<b>··</b>R<b>···</b></span></div>
<div class="h" style="top:52px"><span style="left:13px;color:#9b9b9b">0020</span><span style="left:92.1px">5b 23 1f 40 93 3c 6d e1  27 6d ac 7b 9a 68 80 10</span><span style="left:765.9px">[#<b>·</b>@<b>·</b>&lt;m<b>·</b> 'm<b>·</b>{<b>·</b>h<b>··</b></span></div>
<div class="h" style="top:78px"><span style="left:13px;color:#9b9b9b">0030</span><span style="left:92.1px">01 e9 59 1f 00 00 01 01  08 0a da e8 82 33 79 b7</span><span style="left:765.9px"><b>··</b>Y<b>·····</b> <b>·····</b>3y<b>·</b></span></div>
<div class="h" style="top:104px"><span style="left:13px;color:#4e4e4e">0040</span><span style="left:92.1px">85 5a 4b 47 70 63 45 6f  7a 51 5a 66 65 73 74 70</span><span style="left:765.9px"><b>·</b>ZKGpcEo zQZfestp</span></div>
<div class="h" style="top:130px"><span style="left:13px;color:#4e4e4e">0050</span><span style="left:92.1px">4d 48 72 54 31 6c 5c 72  5c 6e 34 71 75 55 4e 54</span><span style="left:765.9px">MHrT1l\r \n4quUNT</span></div>
<div class="h" style="top:156px"><span style="left:13px;color:#4e4e4e">0060</span><span style="left:92.1px">55 57 58 49 46 57 6f 32  4a 36 56 6b 6f 33 53 72</span><span style="left:765.9px">UWXIFWo2 J6Vko3Sr</span></div>
<div class="h" style="top:182px"><span style="left:13px;color:#4e4e4e">0070</span><span style="left:92.1px">38 54 35 48 46 63 73 67</span><span style="left:765.9px">8T5HFcsg</span></div>
</div>
<div class="abs" style="left:1694px;top:652px;width:1px;height:931px;background:#bdbdbd"></div>
<div class="abs" style="left:0;top:653px;width:2px;height:930px;background:#c9c9c9"></div>
<div class="abs" style="left:0;top:1582px;width:2880px;height:2px;background:#c6c6c6"></div><div id="statusline"></div><div id="status"></div>
<svg class="abs" style="left:20px;top:1596px;overflow:visible" width="28" height="28" viewBox="0 0 28 28"><defs><radialGradient id="g29" cx="0.4" cy="0.3" r="0.8"><stop offset="0" stop-color="#ec9a9b"/><stop offset="0.6" stop-color="#de5c62"/><stop offset="1" stop-color="#d74850"/></radialGradient></defs><circle cx="14" cy="14" r="13" fill="url(#g29)" stroke="#7c3a40" stroke-width="1.8"/></svg><svg class="abs" style="left:71.5px;top:1596px;overflow:visible" width="28" height="28" viewBox="0 0 28 28"><defs><linearGradient id="g30" x1="0" y1="0" x2="1" y2="0.3"><stop offset="0" stop-color="#5ab8ee"/><stop offset="1" stop-color="#1e97dc"/></linearGradient><linearGradient id="g31" x1="0" y1="0" x2="0" y2="1"><stop offset="0" stop-color="#f4f4ee"/><stop offset="1" stop-color="#e9e9d8"/></linearGradient></defs><path d="M0.5,1 L16.5,1 L21.3,5.8 L21.3,27 L0.5,27 Z" fill="url(#g31)" stroke="#b9b9b0" stroke-width="1"/><path d="M0.5,1 L16,1 L16.8,2 L16.8,7.3 L0.5,7.3 Z" fill="url(#g30)"/><path d="M5,8 C6,4.8 7.5,3 10.3,2.2 C9.4,4 9.3,5.8 10.2,8 Z" fill="#fff"/><g font-family="'DejaVu Serif',serif" font-size="3.6" fill="#aaa"><text x="3" y="13.6" textLength="14">01010</text><text x="3" y="18.8" textLength="14">01101</text><text x="3" y="24" textLength="14">01110</text></g><path d="M20.5,4.6 L24.2,1 Q25,0.3 25.8,1 L27.3,2.5 Q28,3.3 27.3,4.1 L23.7,7.8 Z" fill="#555753"/><path d="M19.7,5.5 L22.9,8.7 L12,19.6 L8.8,16.4 Z" fill="#555753"/><path d="M8.2,17 L11.4,20.2 L5.8,22.6 Z" fill="#000"/></svg>
<div class="st" style="left:138.3px;letter-spacing:1.05px">client.pcap</div>
<div class="abs" style="left:1888px;top:1607px;width:10px;height:10px;border-radius:50%;background:#b4b4b4"></div>
<div class="st" style="left:1920.7px;letter-spacing:1.11px">Packets: 230648 · Displayed: 226985 (98.4%)</div>
<div class="abs" style="left:2680px;top:1607px;width:10px;height:10px;border-radius:50%;background:#b4b4b4"></div>
<div class="st" style="left:2713px;letter-spacing:.83px">Profile: Default</div>
</div></body></html>
